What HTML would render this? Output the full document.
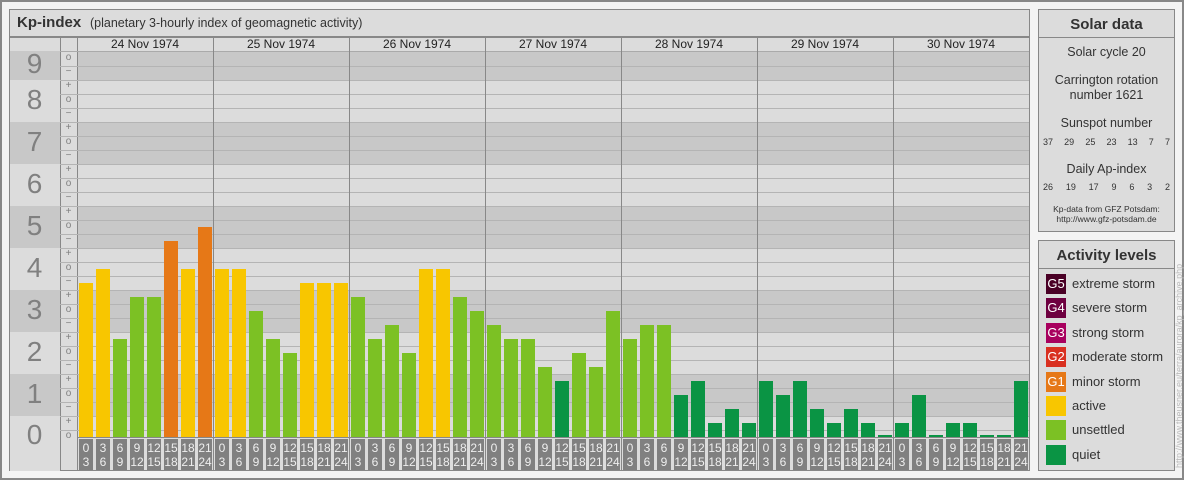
<!DOCTYPE html>
<html><head><meta charset="utf-8"><style>
*{margin:0;padding:0;box-sizing:border-box}
body{width:1184px;height:480px;background:#f4f4f4;font-family:"Liberation Sans",sans-serif;position:relative;overflow:hidden;color:#333}
.a{position:absolute}
#frame{left:0;top:0;width:1184px;height:480px;border:2px solid #888}
#main{left:9px;top:9px;width:1021px;height:462px;background:#dcdcdc;border:1px solid #888}
.box{background:#dcdcdc;border:1px solid #888}
.num{color:#808080;font-size:28px;text-align:center;width:51px;left:9px}
.sg{color:#808080;font-size:10px;width:17px;left:60px;text-align:center}
.lb{background:#808080;color:#eee;font-size:12px;text-align:center;line-height:14px;padding-top:2px;width:14px}
.leg{left:1046px;width:20px;height:20px;color:#fff;font-size:13px;line-height:20px;text-align:center}
.lt{left:1072px;font-size:13px;color:#333;line-height:20px}
.c{text-align:center;width:137px;left:1038px;color:#333}
</style></head><body>
<div class="a" id="frame"></div>
<div class="a" id="main"></div>
<div id="chart"></div>
<div class="a" style="left:10px;top:10px;width:1019px;height:27px;border-bottom:1px solid #888;background:#dcdcdc"></div>
<div class="a" style="left:17px;top:14px;font-size:15px;font-weight:bold;color:#333">Kp-index</div>
<div class="a" style="left:90px;top:16px;font-size:12.5px;color:#333">(planetary 3-hourly index of geomagnetic activity)</div>

<div class="a box" style="left:1038px;top:9px;width:137px;height:223px"></div>
<div class="a" style="left:1039px;top:10px;width:135px;height:28px;border-bottom:1px solid #888"></div>
<div class="a c" style="top:16px;font-size:15px;font-weight:bold">Solar data</div>
<div class="a c" style="top:45px;font-size:12.5px">Solar cycle 20</div>
<div class="a c" style="top:73px;font-size:12.5px;line-height:15px">Carrington rotation<br>number 1621</div>
<div class="a c" style="top:116px;font-size:12.5px">Sunspot number</div>
<div class="a" style="left:1043px;top:137px;width:127px;font-size:9px;display:flex;justify-content:space-between"><span>37</span><span>29</span><span>25</span><span>23</span><span>13</span><span>7</span><span>7</span></div>
<div class="a c" style="top:162px;font-size:12.5px">Daily Ap-index</div>
<div class="a" style="left:1043px;top:182px;width:127px;font-size:9px;display:flex;justify-content:space-between"><span>26</span><span>19</span><span>17</span><span>9</span><span>6</span><span>3</span><span>2</span></div>
<div class="a c" style="top:204px;font-size:8.5px;line-height:10px">Kp-data from GFZ Potsdam:<br>http://www.gfz-potsdam.de</div>

<div class="a box" style="left:1038px;top:240px;width:137px;height:231px"></div>
<div class="a" style="left:1039px;top:241px;width:135px;height:28px;border-bottom:1px solid #888"></div>
<div class="a c" style="top:247px;font-size:15px;font-weight:bold">Activity levels</div>
<div class="a leg" style="top:274px;background:#4a0026">G5</div><div class="a lt" style="top:274px">extreme storm</div>
<div class="a leg" style="top:298px;background:#6e0040">G4</div><div class="a lt" style="top:298px">severe storm</div>
<div class="a leg" style="top:323px;background:#a8005e">G3</div><div class="a lt" style="top:323px">strong storm</div>
<div class="a leg" style="top:347px;background:#d93020">G2</div><div class="a lt" style="top:347px">moderate storm</div>
<div class="a leg" style="top:372px;background:#e67817">G1</div><div class="a lt" style="top:372px">minor storm</div>
<div class="a leg" style="top:396px;background:#f8c600"></div><div class="a lt" style="top:396px">active</div>
<div class="a leg" style="top:420px;background:#7cc124"></div><div class="a lt" style="top:420px">unsettled</div>
<div class="a leg" style="top:445px;background:#0a9444"></div><div class="a lt" style="top:445px">quiet</div>
<div class="a" style="left:1174px;top:468px;transform:rotate(-90deg);transform-origin:0 0;font-size:9px;color:#bbb;white-space:nowrap;width:230px;text-align:left">http://www.theusner.eu/terra/aurora/kp_archive.php</div>

<script>
(function(){
var h='';
var B=437,U=42;
for(var k=0;k<=9;k++){
  var t0=Math.max(51,Math.round(B-(k+0.5)*U)), b0=k==0?471:Math.round(B-(k-0.5)*U);
  var col=(k%2==1)?'#c8c8c8':'#dcdcdc';
  h+='<div class="a" style="left:10px;top:'+t0+'px;width:50px;height:'+(b0-t0)+'px;background:'+col+'"></div>';
  var cy=(k==0)?436:(k==9?65:B-k*U);
  h+='<div class="a num" style="top:'+(cy-17)+'px">'+k+'</div>';
  if(k>0){var bb=Math.min(b0,437);h+='<div class="a" style="left:77px;top:'+t0+'px;width:952px;height:'+(bb-t0)+'px;background:'+col+'"></div>';}
}
h+='<div class="a" style="left:60px;top:37px;width:1px;height:434px;background:#888"></div>';
h+='<div class="a" style="left:77px;top:37px;width:1px;height:434px;background:#888"></div>';
h+='<div class="a" style="left:10px;top:37px;width:1019px;height:1px;background:#888"></div>';
h+='<div class="a" style="left:60px;top:51px;width:969px;height:1px;background:#aaa"></div>';
var signs=[];
for(var k=9;k>=0;k--){signs.push(['+',k+1/3]);signs.push(['o',k]);signs.push(['\u2212',k-1/3]);}
for(var i=0;i<signs.length;i++){
  var v=signs[i][1]; if(v>9.01||v<-0.01)continue;
  var y=B-v*U;
  h+='<div class="a sg" style="top:'+(y-7)+'px">'+signs[i][0]+'</div>';
  var ly=Math.round(y+7);
  if(ly<437){h+='<div class="a" style="left:60px;top:'+ly+'px;width:969px;height:1px;background:#b4b4b4"></div>';}
}
var dates=['24','25','26','27','28','29','30'];
var val=[[3.67,4,2.33,3.33,3.33,4.67,4,5],[4,4,3,2.33,2,3.67,3.67,3.67],[3.33,2.33,2.67,2,4,4,3.33,3],[2.67,2.33,2.33,1.67,1.33,2,1.67,3],[2.33,2.67,2.67,1,1.33,0.33,0.67,0.33],[1.33,1,1.33,0.67,0.33,0.67,0.33,0],[0.33,1,0,0.33,0.33,0,0,1.33]];
var c=[['y','y','g','g','g','o','y','o'],['y','y','g','g','g','y','y','y'],['g','g','g','g','y','y','g','g'],['g','g','g','g','q','g','g','g'],['g','g','g','q','q','q','q','q'],['q','q','q','q','q','q','q','q'],['q','q','q','q','q','q','q','q']];
var cm={y:'#f8c600',g:'#7cc124',o:'#e67817',q:'#0a9444'};
var lab=[['0','3'],['3','6'],['6','9'],['9','12'],['12','15'],['15','18'],['18','21'],['21','24']];
for(var d=0;d<7;d++){
  var x0=77+d*136;
  if(d>0)h+='<div class="a" style="left:'+x0+'px;top:37px;width:1px;height:434px;background:#888"></div>';
  h+='<div class="a" style="left:'+x0+'px;top:37px;width:136px;text-align:center;font-size:12px;line-height:15px;color:#222">'+dates[d]+' Nov 1974</div>';
  for(var i=0;i<8;i++){
    var bx=x0+2+17*i, hh=Math.max(2,Math.round(val[d][i]*U));
    h+='<div class="a" style="left:'+bx+'px;top:'+(B-hh)+'px;width:14px;height:'+hh+'px;background:'+cm[c[d][i]]+'"></div>';
    h+='<div class="a lb" style="left:'+bx+'px;top:439px;height:31px">'+lab[i][0]+'<br>'+lab[i][1]+'</div>';
  }
}
h+='<div class="a" style="left:77px;top:437px;width:952px;height:1px;background:#888"></div>';
document.getElementById('chart').innerHTML=h;
})();
</script>
</body></html>
